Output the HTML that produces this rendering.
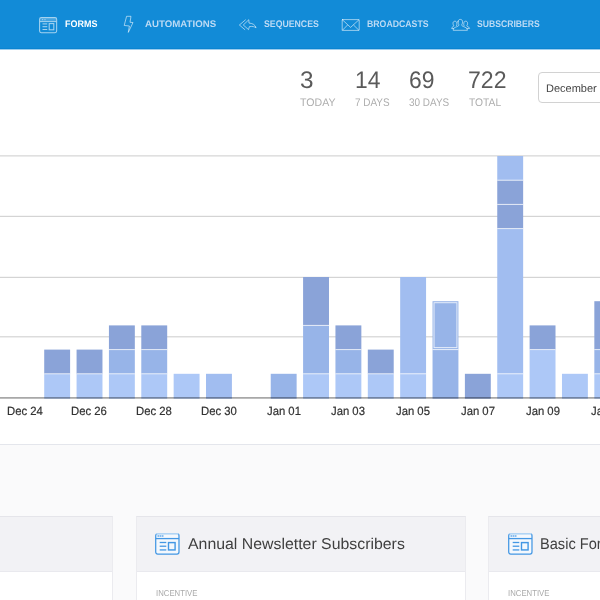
<!DOCTYPE html>
<html lang="en">
<head>
<meta charset="utf-8">
<title>Forms</title>
<style>
*{box-sizing:border-box;margin:0;padding:0}
html,body{width:600px;height:600px;overflow:hidden;background:#fafafb;font-family:"Liberation Sans",sans-serif;}
body{position:relative}
#page{position:absolute;left:0;top:0;width:600px;height:600px;overflow:hidden;background:#fafafb;will-change:transform}
.tx{position:absolute;display:block;line-height:1;white-space:nowrap;transform-origin:0 50%;font-family:"Liberation Sans",sans-serif}
#hdr{position:absolute;left:0;top:0;width:600px;height:50px;background:#128bd7;border-bottom:1px solid #9ccdee;box-shadow:inset 0 -1px 0 #0b84d1}
.ic{position:absolute;overflow:visible}
#top{position:absolute;left:0;top:50px;width:600px;height:395px;background:#fff;border-bottom:1px solid #e4e6ec}
#sel{position:absolute;left:538px;top:72px;width:120px;height:31px;border:1px solid #d2d2d2;border-radius:4px;background:#fff}
.ax{-webkit-text-stroke:0.2px #333}
#chart{position:absolute;left:0;top:0;width:600px;height:600px}
.card{position:absolute;top:515.6px;height:120px;width:330px;background:#fff;border:1px solid #ebebef;border-top-color:#e5e5ea}
.card .h{position:absolute;left:0;top:0;right:0;height:55.4px;background:#f2f2f5;border-bottom:1px solid #e9e9ee}
</style>
</head>
<body>
<div id="page">
<div id="hdr">
<svg class="ic" style="left:38.75px;top:16.75px;opacity:.62" viewBox="0 0 18.25 16.25" width="18.25" height="16.25" fill="none" stroke="#ffffff" stroke-width="1.05">
<rect x="0.6" y="0.6" width="17.05" height="15.05" rx="1.6"/>
<rect x="1.1" y="1.1" width="16.05" height="3.2" fill="#ffffff" fill-opacity="0.35" stroke="none"/>
<line x1="0.6" y1="4.6" x2="17.65" y2="4.6"/>
<line x1="3" y1="2.7" x2="6.6" y2="2.7" stroke-dasharray="1.2 1.2" stroke-width="1"/>
<line x1="3.5" y1="6.9" x2="8.25" y2="6.9"/>
<line x1="3.5" y1="9.7" x2="8.25" y2="9.7"/>
<line x1="3.5" y1="12.5" x2="8.25" y2="12.5"/>
<rect x="10.2" y="6.6" width="4.6" height="6.2"/>
</svg>
<svg class="ic" style="left:0;top:0" width="600" height="50" viewBox="0 0 600 50" fill="none" stroke="#ffffff" stroke-opacity="0.56" stroke-width="1" stroke-linejoin="round" stroke-linecap="round">
<path d="M127 16.3 L131 16.3 L130 22.3 L133 22.5 L128.3 32.4 L129.4 26 L124.6 25.5 Z"/>
<path d="M245.4 19.9 L239.4 25 L244.8 29.6"/>
<path d="M248.5 20 L243.3 25 L248.5 29.6 L249.4 26.6 C252.5 26.2 254.5 26.6 256.1 27.8 C255.2 25 253 23.3 249.4 23.1 Z"/>
<rect x="342.2" y="19.6" width="17" height="10.8" rx="0.5"/>
<path d="M342.4 19.8 L350.6 27.4 L358.9 19.8"/>
<path d="M342.5 30.2 L347.3 25.3"/>
<path d="M358.8 30.2 L353.8 25.3"/>
<path d="M458 21.8 C458 20.3 459 19.4 460.3 19.4 C461.6 19.4 462.6 20.3 462.6 21.8 C462.6 23.4 462 24.3 461.6 24.9 C461.6 26 463.5 26.6 465 27.2 C466.8 27.9 467.4 28.8 467.4 30.3 L453.2 30.3 C453.2 28.8 453.8 27.9 455.6 27.2 C457.1 26.6 459 26 459 24.9 C458.6 24.3 458 23.4 458 21.8 Z"/>
<path d="M456.6 25.6 C456.9 25 457 24.6 456.8 23.4 C456.8 22 456 21.2 454.9 21.2 C453.8 21.2 453 22 453 23.3 C453 24.6 453.4 25.3 453.8 25.8 C453.8 26.7 451.6 27 451.6 28.4 L453.6 28.6"/>
<path d="M464 25.6 C463.7 25 463.6 24.6 463.8 23.4 C463.8 22 464.6 21.2 465.7 21.2 C466.8 21.2 467.6 22 467.6 23.3 C467.6 24.6 467.2 25.3 466.8 25.8 C466.8 26.7 469.6 27 469.6 28.4 L467 28.6"/>
</svg>
<span class="tx nav on" style="left:64.80px;top:19.30px;font-size:9.5px;font-weight:bold;color:#ffffff;transform:rotate(0.03deg) scaleX(0.9462)">FORMS</span>
<span class="tx nav" style="left:145.37px;top:19.30px;font-size:9.5px;font-weight:bold;color:#bcdaf4;transform:rotate(0.03deg) scaleX(1.0187)">AUTOMATIONS</span>
<span class="tx nav" style="left:264.28px;top:19.30px;font-size:9.5px;font-weight:bold;color:#bcdaf4;transform:rotate(0.03deg) scaleX(0.9189)">SEQUENCES</span>
<span class="tx nav" style="left:367.40px;top:19.30px;font-size:9.5px;font-weight:bold;color:#bcdaf4;transform:rotate(0.03deg) scaleX(0.9191)">BROADCASTS</span>
<span class="tx nav" style="left:477.08px;top:19.30px;font-size:9.5px;font-weight:bold;color:#bcdaf4;transform:rotate(0.03deg) scaleX(0.9085)">SUBSCRIBERS</span>
</div>
<div id="top"></div>
<div id="stats">
<span class="tx num" style="left:300.40px;top:67.80px;font-size:24px;font-weight:normal;color:#5a5a5a;transform:rotate(0.03deg) scaleX(1.0129)">3</span>
<span class="tx num" style="left:355.26px;top:67.80px;font-size:24px;font-weight:normal;color:#5a5a5a;transform:rotate(0.03deg) scaleX(0.9525)">14</span>
<span class="tx num" style="left:408.77px;top:67.80px;font-size:24px;font-weight:normal;color:#5a5a5a;transform:rotate(0.03deg) scaleX(0.9521)">69</span>
<span class="tx num" style="left:468.28px;top:67.80px;font-size:24px;font-weight:normal;color:#5a5a5a;transform:rotate(0.03deg) scaleX(0.9602)">722</span>
<span class="tx lbl" style="left:300.27px;top:97.00px;font-size:11px;font-weight:normal;color:#adadad;transform:rotate(0.03deg) scaleX(0.9612)">TODAY</span>
<span class="tx lbl" style="left:354.64px;top:97.00px;font-size:11px;font-weight:normal;color:#adadad;transform:rotate(0.03deg) scaleX(0.9039)">7 DAYS</span>
<span class="tx lbl" style="left:408.99px;top:97.00px;font-size:11px;font-weight:normal;color:#adadad;transform:rotate(0.03deg) scaleX(0.9034)">30 DAYS</span>
<span class="tx lbl" style="left:468.58px;top:97.00px;font-size:11px;font-weight:normal;color:#adadad;transform:rotate(0.03deg) scaleX(0.9338)">TOTAL</span>
</div>
<div id="sel"></div>
<span class="tx selt" style="left:545.90px;top:82.52px;font-size:11.1px;font-weight:normal;color:#444;transform:rotate(0.03deg) scaleX(0.9917)">December</span>
<svg id="chart" viewBox="0 0 600 600" width="600" height="600">
<rect x="0" y="155.40" width="600" height="1" fill="#cccccc"/>
<rect x="0" y="215.83" width="600" height="1" fill="#cccccc"/>
<rect x="0" y="276.83" width="600" height="1" fill="#cccccc"/>
<rect x="0" y="336.33" width="600" height="1" fill="#cccccc"/>
<rect x="44.21" y="373.80" width="25.9" height="24.90" fill="#adc8f7"/>
<rect x="44.21" y="349.60" width="25.9" height="24.20" fill="#8aa3d8"/>
<rect x="76.57" y="373.80" width="25.9" height="24.90" fill="#adc8f7"/>
<rect x="76.57" y="349.60" width="25.9" height="24.20" fill="#8aa3d8"/>
<rect x="108.93" y="373.80" width="25.9" height="24.90" fill="#adc8f7"/>
<rect x="108.93" y="349.60" width="25.9" height="24.20" fill="#97b4e8"/>
<rect x="108.93" y="325.40" width="25.9" height="24.20" fill="#8aa3d8"/>
<rect x="141.29" y="373.80" width="25.9" height="24.90" fill="#adc8f7"/>
<rect x="141.29" y="349.60" width="25.9" height="24.20" fill="#97b4e8"/>
<rect x="141.29" y="325.40" width="25.9" height="24.20" fill="#8aa3d8"/>
<rect x="173.65" y="373.80" width="25.9" height="24.90" fill="#adc8f7"/>
<rect x="206.01" y="373.80" width="25.9" height="24.90" fill="#a1bdf0"/>
<rect x="270.73" y="373.80" width="25.9" height="24.90" fill="#97b4e8"/>
<rect x="303.09" y="373.80" width="25.9" height="24.90" fill="#adc8f7"/>
<rect x="303.09" y="325.40" width="25.9" height="48.40" fill="#97b4e8"/>
<rect x="303.09" y="277.00" width="25.9" height="48.40" fill="#8aa3d8"/>
<rect x="335.45" y="373.80" width="25.9" height="24.90" fill="#adc8f7"/>
<rect x="335.45" y="349.60" width="25.9" height="24.20" fill="#97b4e8"/>
<rect x="335.45" y="325.40" width="25.9" height="24.20" fill="#8aa3d8"/>
<rect x="367.81" y="373.80" width="25.9" height="24.90" fill="#adc8f7"/>
<rect x="367.81" y="349.60" width="25.9" height="24.20" fill="#8aa3d8"/>
<rect x="400.17" y="373.80" width="25.9" height="24.90" fill="#adc8f7"/>
<rect x="400.17" y="277.00" width="25.9" height="96.80" fill="#a1bdf0"/>
<rect x="432.53" y="349.60" width="25.9" height="49.10" fill="#97b4e8"/>
<rect x="432.53" y="301.20" width="25.9" height="48.40" fill="#97b4e8"/>
<rect x="464.89" y="373.80" width="25.9" height="24.90" fill="#8aa3d8"/>
<rect x="497.25" y="373.80" width="25.9" height="24.90" fill="#adc8f7"/>
<rect x="497.25" y="228.60" width="25.9" height="145.20" fill="#a1bdf0"/>
<rect x="497.25" y="204.40" width="25.9" height="24.20" fill="#8aa3d8"/>
<rect x="497.25" y="180.20" width="25.9" height="24.20" fill="#8aa3d8"/>
<rect x="497.25" y="156.00" width="25.9" height="24.20" fill="#a1bdf0"/>
<rect x="529.61" y="349.60" width="25.9" height="49.10" fill="#adc8f7"/>
<rect x="529.61" y="325.40" width="25.9" height="24.20" fill="#8aa3d8"/>
<rect x="561.97" y="373.80" width="25.9" height="24.90" fill="#adc8f7"/>
<rect x="594.33" y="373.80" width="25.9" height="24.90" fill="#adc8f7"/>
<rect x="594.33" y="349.60" width="25.9" height="24.20" fill="#97b4e8"/>
<rect x="594.33" y="301.20" width="25.9" height="48.40" fill="#8aa3d8"/>
<rect x="44.21" y="373.30" width="25.9" height="1" fill="#ffffff" fill-opacity="0.7"/>
<rect x="76.57" y="373.30" width="25.9" height="1" fill="#ffffff" fill-opacity="0.7"/>
<rect x="108.93" y="373.30" width="25.9" height="1" fill="#ffffff" fill-opacity="0.7"/>
<rect x="108.93" y="349.10" width="25.9" height="1" fill="#ffffff" fill-opacity="0.7"/>
<rect x="141.29" y="373.30" width="25.9" height="1" fill="#ffffff" fill-opacity="0.7"/>
<rect x="141.29" y="349.10" width="25.9" height="1" fill="#ffffff" fill-opacity="0.7"/>
<rect x="303.09" y="373.30" width="25.9" height="1" fill="#ffffff" fill-opacity="0.7"/>
<rect x="303.09" y="324.90" width="25.9" height="1" fill="#ffffff" fill-opacity="0.7"/>
<rect x="335.45" y="373.30" width="25.9" height="1" fill="#ffffff" fill-opacity="0.7"/>
<rect x="335.45" y="349.10" width="25.9" height="1" fill="#ffffff" fill-opacity="0.7"/>
<rect x="367.81" y="373.30" width="25.9" height="1" fill="#ffffff" fill-opacity="0.7"/>
<rect x="400.17" y="373.30" width="25.9" height="1" fill="#ffffff" fill-opacity="0.7"/>
<rect x="432.53" y="349.10" width="25.9" height="1" fill="#ffffff" fill-opacity="0.7"/>
<rect x="434.03" y="302.70" width="22.9" height="44.90" fill="none" stroke="#ffffff" stroke-opacity="0.75" stroke-width="1"/>
<rect x="497.25" y="373.30" width="25.9" height="1" fill="#ffffff" fill-opacity="0.7"/>
<rect x="497.25" y="228.10" width="25.9" height="1" fill="#ffffff" fill-opacity="0.7"/>
<rect x="497.25" y="203.90" width="25.9" height="1" fill="#ffffff" fill-opacity="0.7"/>
<rect x="497.25" y="179.70" width="25.9" height="1" fill="#ffffff" fill-opacity="0.7"/>
<rect x="529.61" y="349.10" width="25.9" height="1" fill="#ffffff" fill-opacity="0.7"/>
<rect x="594.33" y="373.30" width="25.9" height="1" fill="#ffffff" fill-opacity="0.7"/>
<rect x="594.33" y="349.10" width="25.9" height="1" fill="#ffffff" fill-opacity="0.7"/>
<rect x="0" y="397.15" width="600" height="1.5" fill="#000000" fill-opacity="0.4"/>
</svg>
<div id="axis">
<span class="tx ax" style="left:6.57px;top:406.00px;font-size:11.9px;font-weight:normal;color:#333;transform:rotate(0.03deg) scaleX(0.9500)">Dec 24</span>
<span class="tx ax" style="left:71.35px;top:406.00px;font-size:11.9px;font-weight:normal;color:#333;transform:rotate(0.03deg) scaleX(0.9500)">Dec 26</span>
<span class="tx ax" style="left:136.07px;top:406.00px;font-size:11.9px;font-weight:normal;color:#333;transform:rotate(0.03deg) scaleX(0.9500)">Dec 28</span>
<span class="tx ax" style="left:200.75px;top:406.00px;font-size:11.9px;font-weight:normal;color:#333;transform:rotate(0.03deg) scaleX(0.9500)">Dec 30</span>
<span class="tx ax" style="left:266.62px;top:406.00px;font-size:11.9px;font-weight:normal;color:#333;transform:rotate(0.03deg) scaleX(0.9500)">Jan 01</span>
<span class="tx ax" style="left:331.34px;top:406.00px;font-size:11.9px;font-weight:normal;color:#333;transform:rotate(0.03deg) scaleX(0.9500)">Jan 03</span>
<span class="tx ax" style="left:396.05px;top:406.00px;font-size:11.9px;font-weight:normal;color:#333;transform:rotate(0.03deg) scaleX(0.9500)">Jan 05</span>
<span class="tx ax" style="left:460.79px;top:406.00px;font-size:11.9px;font-weight:normal;color:#333;transform:rotate(0.03deg) scaleX(0.9500)">Jan 07</span>
<span class="tx ax" style="left:525.51px;top:406.00px;font-size:11.9px;font-weight:normal;color:#333;transform:rotate(0.03deg) scaleX(0.9500)">Jan 09</span>
<span class="tx ax" style="left:590.72px;top:406.00px;font-size:11.9px;font-weight:normal;color:#333;transform:rotate(0.03deg) scaleX(0.9500)">Jan 11</span>
</div>
<div class="card" style="left:-217px"><div class="h"></div></div>
<div class="card" style="left:136px"><div class="h"><svg class="ic" style="left:18.0px;top:16.7px" viewBox="0 0 24.7 21.2" preserveAspectRatio="none" width="24.7" height="21.9" fill="none" stroke="#4397e4" stroke-width="1.25">
<rect x="0.7" y="0.7" width="23.3" height="19.8" rx="2" fill="#f4f8fd"/>
<rect x="1.2" y="0.2" width="22.3" height="1.2" fill="#cfe4f8" stroke="none"/>
<line x1="0.7" y1="5.4" x2="24" y2="5.4"/>
<line x1="2.6" y1="3" x2="9" y2="3" stroke-dasharray="1.2 0.8" stroke-width="1.5"/>
<line x1="4.7" y1="9.2" x2="11.3" y2="9.2"/>
<line x1="4.7" y1="12.8" x2="11.3" y2="12.8"/>
<line x1="4.7" y1="16.4" x2="11.3" y2="16.4"/>
<rect x="13.5" y="9.3" width="6.6" height="7.1" stroke-width="1.4"/>
</svg></div></div>
<div class="card" style="left:488px"><div class="h"><svg class="ic" style="left:18.5px;top:16.7px" viewBox="0 0 24.7 21.2" preserveAspectRatio="none" width="24.7" height="21.9" fill="none" stroke="#4397e4" stroke-width="1.25">
<rect x="0.7" y="0.7" width="23.3" height="19.8" rx="2" fill="#f4f8fd"/>
<rect x="1.2" y="0.2" width="22.3" height="1.2" fill="#cfe4f8" stroke="none"/>
<line x1="0.7" y1="5.4" x2="24" y2="5.4"/>
<line x1="2.6" y1="3" x2="9" y2="3" stroke-dasharray="1.2 0.8" stroke-width="1.5"/>
<line x1="4.7" y1="9.2" x2="11.3" y2="9.2"/>
<line x1="4.7" y1="12.8" x2="11.3" y2="12.8"/>
<line x1="4.7" y1="16.4" x2="11.3" y2="16.4"/>
<rect x="13.5" y="9.3" width="6.6" height="7.1" stroke-width="1.4"/>
</svg></div></div>
<span class="tx ttl" style="left:187.65px;top:536.40px;font-size:15.6px;font-weight:normal;color:#3f3f3f;transform:rotate(0.03deg) scaleX(1.0170)">Annual Newsletter Subscribers</span>
<span class="tx ttl" style="left:539.88px;top:536.40px;font-size:15.6px;font-weight:normal;color:#3f3f3f;transform:rotate(0.03deg) scaleX(0.9358)">Basic Form</span>
<span class="tx inc" style="left:155.81px;top:589.38px;font-size:8.6px;font-weight:normal;color:#aaa;transform:rotate(0.03deg) scaleX(0.9044)">INCENTIVE</span>
<span class="tx inc" style="left:508.11px;top:589.38px;font-size:8.6px;font-weight:normal;color:#aaa;transform:rotate(0.03deg) scaleX(0.9044)">INCENTIVE</span>
</div>
</body>
</html>
